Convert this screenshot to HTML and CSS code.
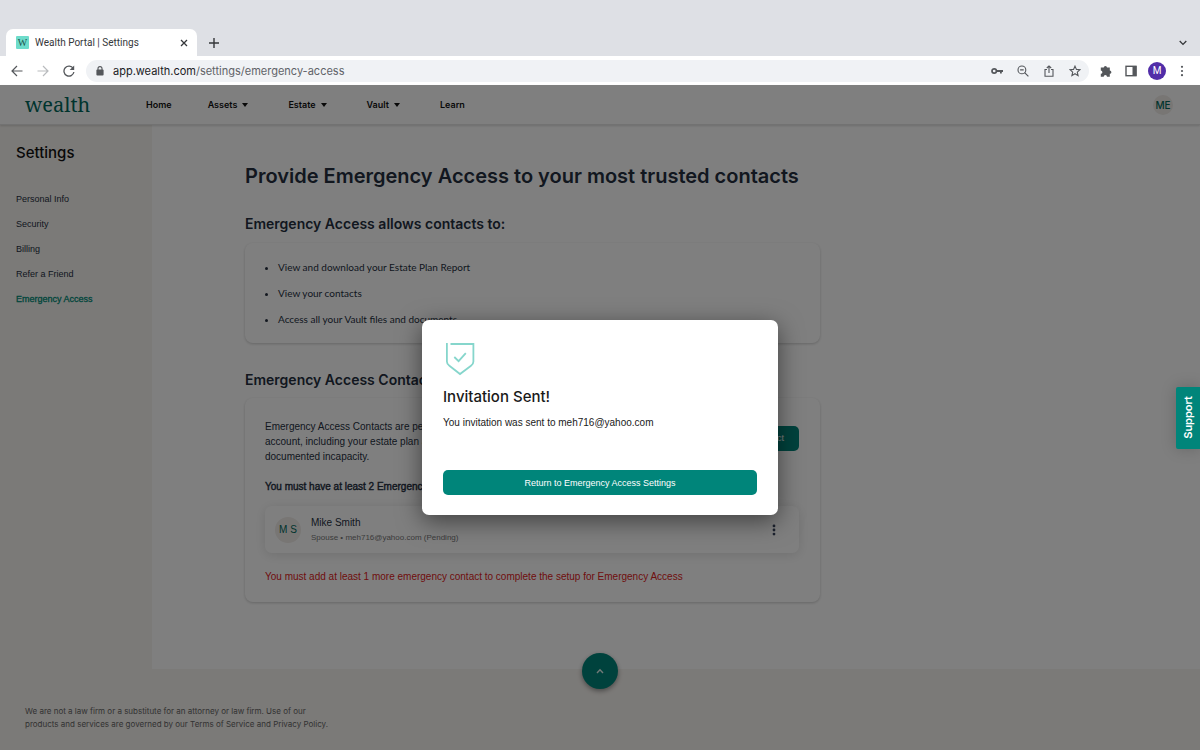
FILE: index.html
```html
<!DOCTYPE html>
<html lang="en">
<head>
<meta charset="utf-8">
<meta name="viewport" content="width=device-width, initial-scale=1">
<title>Wealth Portal | Settings</title>
<link rel="stylesheet" href="styles.css">
</head>
<body>
<div class="chrome">
  <div class="tabs">
    <div class="tab">
      <span class="favicon">W</span>
      <span class="tab-title">Wealth Portal | Settings</span>
      <button class="icon-btn" aria-label="Close tab"><svg width="8" height="8" viewBox="0 0 8 8"><path d="M1 1l6 6M7 1L1 7" stroke="#35373a" stroke-width="1.3"/></svg></button>
    </div>
    <button class="icon-btn new-tab" aria-label="New tab"><svg width="10" height="10" viewBox="0 0 10 10"><path d="M5 0v10M0 5h10" stroke="#35373a" stroke-width="1.4"/></svg></button>
    <button class="icon-btn tab-list" aria-label="Search tabs"><svg width="8" height="6" viewBox="0 0 8 6"><path d="M.7 1L4 4.4 7.3 1" fill="none" stroke="#35373a" stroke-width="1.3"/></svg></button>
  </div>
  <div class="toolbar">
    <div class="history">
      <button class="icon-btn" aria-label="Back"><svg width="12" height="12" viewBox="0 0 12 12"><path d="M11.5 6H1.2M6 1L1 6l5 5" fill="none" stroke="#54575b" stroke-width="1.2"/></svg></button>
      <button class="icon-btn" aria-label="Forward"><svg width="12" height="12" viewBox="0 0 12 12"><path d="M.5 6h10.3M6 1l5 5-5 5" fill="none" stroke="#b9bbbe" stroke-width="1.2"/></svg></button>
      <button class="icon-btn" aria-label="Reload"><svg width="12" height="12" viewBox="0 0 12 12"><path d="M10.2 3.4A5 5 0 1 0 10.9 7" fill="none" stroke="#54575b" stroke-width="1.3"/><path d="M11.2.6v4.5H6.7z" fill="#54575b"/></svg></button>
    </div>
    <div class="omnibox">
      <svg width="8" height="10" viewBox="0 0 8 10"><rect x=".4" y="3.6" width="7.2" height="6" rx="1" fill="#54575b"/><path d="M2 4V2.6a2 2 0 0 1 4 0V4" fill="none" stroke="#54575b" stroke-width="1.1"/></svg>
      <span class="url"><b>app.wealth.com</b>/settings/emergency-access</span>
      <div class="page-actions">
        <button class="icon-btn" aria-label="Passwords"><svg width="12" height="8" viewBox="0 0 12 8"><circle cx="3.2" cy="4" r="2.2" fill="none" stroke="#54575b" stroke-width="1.7"/><path d="M5.5 4H12M9.9 4v2.6" fill="none" stroke="#54575b" stroke-width="1.8"/></svg></button>
        <button class="icon-btn" aria-label="Zoom"><svg width="12" height="12" viewBox="0 0 12 12"><circle cx="4.9" cy="4.9" r="3.9" fill="none" stroke="#54575b" stroke-width="1.1"/><path d="M7.6 7.6l3.8 3.8M3.1 4.9h3.6" stroke="#54575b" stroke-width="1.2"/></svg></button>
        <button class="icon-btn" aria-label="Share"><svg width="12" height="12" viewBox="0 0 12 12"><path d="M4 4.5H2v6.8h8V4.5H8M6 8V1M3.8 3L6 .9 8.2 3" fill="none" stroke="#54575b" stroke-width="1.1"/></svg></button>
        <button class="icon-btn" aria-label="Bookmark"><svg width="12" height="12" viewBox="0 0 12 12"><path d="M6 1.1l1.45 3.3 3.55.35-2.7 2.35.8 3.5L6 8.75 2.9 10.6l.8-3.5L1 4.75l3.55-.35z" fill="none" stroke="#54575b" stroke-width="1.1"/></svg></button>
      </div>
    </div>
    <div class="extensions">
      <button class="icon-btn" aria-label="Extensions"><svg width="12" height="12" viewBox="0 0 12 12"><path d="M.8 2.6h3a1.6 1.6 0 1 1 3.2 0h2.8v3a1.6 1.6 0 1 1 0 3.2v2.9H7A1.6 1.6 0 0 0 3.7 11.7H.8V8.8a1.6 1.6 0 0 0 0-3.2z" fill="#54575b"/></svg></button>
      <button class="icon-btn" aria-label="Side panel"><svg width="12" height="12" viewBox="0 0 12 12"><rect x="1" y="1.3" width="10" height="9.4" fill="none" stroke="#54575b" stroke-width="1.4"/><path d="M7.5 1h4v10h-4z" fill="#54575b"/></svg></button>
      <button class="profile">M</button>
      <button class="icon-btn" aria-label="Menu"><svg width="4" height="12" viewBox="0 0 4 12" fill="#54575b"><circle cx="2" cy="1.8" r="1.1"/><circle cx="2" cy="6" r="1.1"/><circle cx="2" cy="10.2" r="1.1"/></svg></button>
    </div>
  </div>
</div>

<div class="viewport">
  <header class="nav">
    <a class="logo" href="#">wealth</a>
    <nav class="nav-links">
      <a href="#">Home</a>
      <a href="#">Assets <i class="caret"></i></a>
      <a href="#">Estate <i class="caret"></i></a>
      <a href="#">Vault <i class="caret"></i></a>
      <a href="#">Learn</a>
    </nav>
    <button class="me">ME</button>
  </header>

  <div class="layout">
    <aside class="sidebar">
      <h2>Settings</h2>
      <a href="#">Personal Info</a>
      <a href="#">Security</a>
      <a href="#">Billing</a>
      <a href="#">Refer a Friend</a>
      <a href="#" class="active">Emergency Access</a>
    </aside>
    <main class="main">
      <div class="content">
        <h1>Provide Emergency Access to your most trusted contacts</h1>
        <h2>Emergency Access allows contacts to:</h2>
        <ul class="card abilities">
          <li>View and download your Estate Plan Report</li>
          <li>View your contacts</li>
          <li>Access all your Vault files and documents</li>
        </ul>
        <h2 class="second">Emergency Access Contacts</h2>
        <section class="card contacts">
          <div class="intro">
            <p>Emergency Access Contacts are people who can open your<br>account, including your estate plan and your files, upon your<br>documented incapacity.</p>
            <button class="add">Add Contact</button>
          </div>
          <p class="rule">You must have at least 2 Emergency Contacts</p>
          <div class="person">
            <span class="initials">M S</span>
            <div class="who"><span class="name">Mike Smith</span><span class="detail">Spouse • meh716@yahoo.com (Pending)</span></div>
            <button class="icon-btn" aria-label="Contact options"><svg width="4" height="12" viewBox="0 0 4 12" fill="#39445c"><circle cx="2" cy="1.9" r="1.4"/><circle cx="2" cy="6" r="1.4"/><circle cx="2" cy="10.1" r="1.4"/></svg></button>
          </div>
          <p class="warning">You must add at least 1 more emergency contact to complete the setup for Emergency Access</p>
        </section>
      </div>
    </main>
  </div>

  <footer class="footer">
    <button class="to-top" aria-label="Back to top"><svg width="8" height="6" viewBox="0 0 8 6"><path d="M1 5l3-3.3L7 5" fill="none" stroke="#e4f3f0" stroke-width="1.4"/></svg></button>
    <p>We are not a law firm or a substitute for an attorney or law firm. Use of our<br>products and services are governed by our Terms of Service and Privacy Policy.</p>
  </footer>

  <div class="overlay">
    <div class="dialog" role="dialog" aria-modal="true" aria-labelledby="sent">
      <svg class="shield" width="30" height="34" viewBox="0 0 30 34" fill="none" stroke="#86d6cc" stroke-width="1.8"><path d="M1.9 1v18.5c0 2 1 3.3 2.5 4.3L15 32l11-8.2c1.5-1 2.4-2.3 2.4-4.3V2H5.5"/><path d="M9.3 15l4.3 4.2 7.2-8"/></svg>
      <h2 id="sent">Invitation Sent!</h2>
      <p>You invitation was sent to meh716@yahoo.com</p>
      <button class="return">Return to Emergency Access Settings</button>
    </div>
  </div>
  <button class="support">Support</button>
</div>
</body>
</html>
```
FILE: styles.css
```css
* { box-sizing: border-box; }
body {
  margin: 0;
  min-height: 100vh;
  display: flex;
  flex-direction: column;
  font-family: "Liberation Sans", Arial, sans-serif;
  font-size: 10px;
  color: #252f3f;
}
h1, h2, p, ul { margin: 0; padding: 0; }
h1, h2 { font-family: Inter, sans-serif; font-weight: 500; }
a { color: inherit; text-decoration: none; }
button { font: inherit; color: inherit; border: 0; padding: 0; background: none; }
svg { display: block; flex: none; }
.icon-btn { display: grid; place-items: center; }

/* Browser window */
.chrome { background: #dee0e5; font-family: Roboto, sans-serif; }
.tabs { display: flex; align-items: center; padding: 29px 13px 0 6px; }
.tab {
  display: flex;
  align-items: center;
  width: 191px;
  height: 27px;
  padding: 0 9px 0 10px;
  background: #fff;
  border-radius: 7px 7px 0 0;
}
.favicon {
  width: 13px;
  height: 13px;
  margin-right: 6px;
  border-radius: 1px;
  background: #6edccb;
  color: #20554d;
  font: 10px/13px "Liberation Serif", serif;
  text-align: center;
}
.tab-title { flex: 1; font-size: 10px; color: #35373a; }
.new-tab { margin-left: 12px; }
.tab-list { margin-left: auto; }
.toolbar {
  display: flex;
  align-items: center;
  height: 29px;
  padding: 0 16px 0 11px;
  background: #fff;
}
.history { display: flex; gap: 14px; margin-right: 11px; }
.omnibox {
  flex: 1;
  display: flex;
  align-items: center;
  height: 22px;
  padding: 0 8px 0 10px;
  border-radius: 11px;
  background: #f0f2f5;
}
.url { flex: 1; margin-left: 9px; font-size: 11px; font-family: Inter, sans-serif; color: #606368; }
.url b { font-weight: 400; color: #202124; }
.page-actions { display: flex; gap: 14px; }
.extensions { display: flex; align-items: center; gap: 13px; margin-left: 11px; }
.profile {
  width: 18px;
  height: 18px;
  margin: 0 1px 0 -2px;
  border-radius: 50%;
  background: #512da8;
  color: #fff;
}

/* Page */
.viewport { position: relative; flex: 1; display: flex; flex-direction: column; background: #f7f4f0; }
.nav {
  display: flex;
  align-items: center;
  height: 40px;
  padding: 0 27px 0 25px;
  background: #fff;
  border-bottom: 1px solid #e4e4e4;
  box-shadow: 0 1px 2px rgba(0, 0, 0, .15);
  color: #111;
  z-index: 1;
}
.logo { width: 121px; font: 20px/30px "Noto Serif", "Liberation Serif", serif; color: #00695c; }
.nav-links { display: flex; gap: 40px; flex: 1; font: 600 9px/16px Inter, sans-serif; }
.nav-links a { display: flex; align-items: center; }
.nav-links a:first-child { margin-right: -4px; }
.caret { margin-left: 5px; border: 3px solid transparent; border-top: 4px solid #111; border-bottom: 0; }
.me { width: 20px; height: 20px; border-radius: 50%; background: #f0ece8; color: #00695c; font: 500 10px/20px Inter, sans-serif; }
.layout { display: grid; grid-template-columns: 152px 1fr; }
.sidebar { display: flex; flex-direction: column; padding: 18px 16px; font-size: 9px; line-height: 25px; }
.sidebar h2 { margin-bottom: 24px; font-size: 15px; line-height: 20px; color: #111; }
.active { color: #008c78; -webkit-text-stroke: 0.3px #008c78; }
.main { padding: 37px 93px 67px; background: #fff; }
.content { max-width: 575px; }
h1 { font-size: 20px; line-height: 28px; white-space: nowrap; }
.content h1, .content h2 { font-weight: 600; }
.content h2 { margin: 24px 0 9px; font-size: 14px; line-height: 20px; }
.content .second { margin: 27px 0 8px; }
.card { border-radius: 8px; background: #fff; box-shadow: 0 1px 3px rgba(0, 0, 0, .2); }
.abilities { padding: 11px 20px 11px 33px; font: 10px/26px Lato, sans-serif; }
.contacts { padding: 21px 21px 18px 20px; line-height: 15px; }
.intro { display: flex; justify-content: space-between; align-items: flex-start; white-space: nowrap; }
.add { margin-top: 7px; padding: 0 15px; height: 25px; border-radius: 5px; background: #00857a; color: #fff; font-size: 9px; }
.rule { margin: 15px 0 12px; -webkit-text-stroke: 0.4px #252f3f; }
.person {
  display: flex;
  align-items: center;
  height: 47px;
  padding: 0 23px 0 10px;
  border-radius: 7px;
  box-shadow: 0 2px 12px rgba(0, 0, 0, .12);
}
.initials { width: 26px; height: 26px; border-radius: 50%; background: #f0ece8; color: #00695c; line-height: 26px; text-align: center; }
.who { flex: 1; display: flex; flex-direction: column; margin-left: 10px; }
.detail { font-size: 8px; color: #777; }
.warning { margin-top: 16px; color: #e02020; }
.footer { position: relative; padding: 36px 25px 10px; font: 8px/13px Inter, sans-serif; color: #666; }
.to-top {
  position: absolute;
  top: -16px;
  left: calc(50% - 18px);
  display: grid;
  place-items: center;
  width: 36px;
  height: 36px;
  border-radius: 50%;
  background: #00857a;
  box-shadow: 0 2px 5px rgba(0, 0, 0, .4);
}

/* Dialog */
.overlay { position: absolute; inset: 0; z-index: 2; display: grid; place-items: center; background: rgba(0, 0, 0, .5); }
.dialog {
  width: 356px;
  padding: 22px 21px 20px;
  border-radius: 7px;
  background: #fff;
  color: #1a1a1a;
  box-shadow: 0 6px 24px rgba(0, 0, 0, .5);
}
.shield { margin-left: 2px; }
.dialog h2 { margin: 11px 0 8px; font-size: 15px; line-height: 20px; }
.dialog p { line-height: 16px; }
.return { width: 100%; height: 25px; margin-top: 39px; border-radius: 5px; background: #00857a; color: #fff; font-size: 9px; }
.support {
  position: absolute;
  z-index: 3;
  right: 0;
  top: calc(50% - 31px);
  width: 24px;
  height: 62px;
  border-radius: 2px 0 0 2px;
  background: #00857a;
  color: #fff;
  font: 600 11px/24px Inter, sans-serif;
  writing-mode: sideways-lr;
  text-align: center;
  box-shadow: 0 0 16px rgba(0, 0, 0, .2);
}
```
